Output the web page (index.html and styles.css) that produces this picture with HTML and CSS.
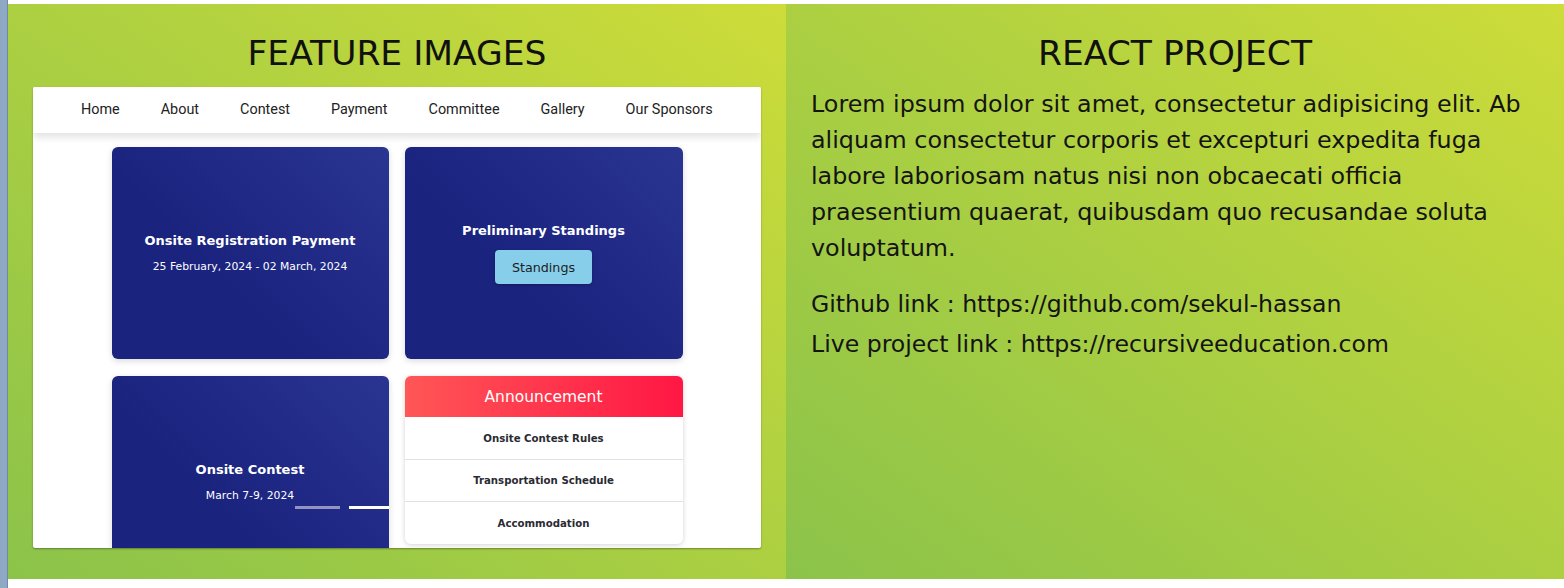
FILE: index.html
```html
<!DOCTYPE html>
<html>
<head>
<meta charset="utf-8">
<link rel="stylesheet" href="styles.css">
</head>
<body>
<div class="page">
  <div class="strip"></div>
  <div class="main">
    <div class="row">
      <section class="panel left">
        <h2 class="title">FEATURE IMAGES</h2>
        <div class="shot">
          <nav class="nav">
            <span>Home</span><span>About</span><span>Contest</span><span>Payment</span><span>Committee</span><span>Gallery</span><span>Our Sponsors</span>
          </nav>
          <div class="grid">
            <div class="card">
              <h3>Onsite Registration Payment</h3>
              <p>25 February, 2024 - 02 March, 2024</p>
            </div>
            <div class="card">
              <h3>Preliminary Standings</h3>
              <button class="btn">Standings</button>
            </div>
            <div class="card">
              <h3>Onsite Contest</h3>
              <p>March 7-9, 2024</p>
              <div class="dots"><span class="dot dim"></span><span class="dot"></span><span class="dot"></span></div>
            </div>
            <div class="notice">
              <div class="notice-head">Announcement</div>
              <div class="notice-row">Onsite Contest Rules</div>
              <div class="notice-row">Transportation Schedule</div>
              <div class="notice-row">Accommodation</div>
            </div>
          </div>
        </div>
      </section>
      <section class="panel right">
        <h2 class="title">REACT PROJECT</h2>
        <p class="desc">Lorem ipsum dolor sit amet, consectetur adipisicing elit. Ab aliquam consectetur corporis et excepturi expedita fuga labore laboriosam natus nisi non obcaecati officia praesentium quaerat, quibusdam quo recusandae soluta voluptatum.</p>
        <p class="link first">Github link : https://github.com/sekul-hassan</p>
        <p class="link">Live project link : https://recursiveeducation.com</p>
      </section>
    </div>
  </div>
</div>
</body>
</html>
```
FILE: styles.css
```css
body {
  margin: 0;
  background: #fff;
  font-family: "DejaVu Sans", sans-serif;
}
.page {
  display: flex;
  height: 588px;
  overflow: hidden;
}
.strip {
  flex: none;
  width: 7px;
  background: #8fa9c5;
  border-right: 1px solid #7089a6;
}
.main {
  flex: 1;
  padding-top: 4px;
}
.row {
  display: flex;
  height: 575px;
}
.panel {
  flex: 1;
  box-sizing: border-box;
  padding: 29px 25px 0;
}
.left {
  background: linear-gradient(to top right, #8bc34a, #cddc39);
}
.right {
  background: linear-gradient(to bottom left, #cddc39, #8bc34a);
}
.title {
  margin: 0;
  font-weight: 400;
  font-size: 34.5px;
  line-height: 40px;
  text-align: center;
  color: #111;
}
.shot {
  margin-top: 14px;
  height: 461px;
  background: #fff;
  overflow: hidden;
  border-radius: 2px;
  box-shadow: 0 1px 2px rgba(0, 0, 0, 0.35);
}
.nav {
  position: relative;
  z-index: 1;
  height: 46px;
  display: flex;
  align-items: center;
  gap: 41px;
  padding-left: 48px;
  background: #fff;
  box-shadow: 0 4px 8px rgba(0, 0, 0, 0.12);
  font-family: Roboto, sans-serif;
  font-size: 14.4px;
  line-height: 48px;
  color: #222;
}
.grid {
  display: grid;
  grid-template-columns: 277px 278px;
  column-gap: 16px;
  row-gap: 17px;
  justify-content: center;
  align-items: start;
  padding-top: 14px;
}
.card {
  position: relative;
  overflow: hidden;
  height: 212px;
  border-radius: 6px;
  background: linear-gradient(225deg, #2a3592 0%, #1a237e 62%);
  box-shadow: 0 2px 6px rgba(0, 0, 0, 0.15);
  color: #fff;
  display: flex;
  flex-direction: column;
  align-items: center;
  justify-content: center;
  text-align: center;
}
.card h3 {
  margin: 0;
  font-size: 13px;
  font-weight: 700;
  line-height: 18px;
}
.card p {
  margin: 10px 0 0;
  font-size: 10.8px;
  line-height: 14px;
}
.btn {
  margin-top: 10px;
  width: 97px;
  height: 34px;
  border: 0;
  border-radius: 4px;
  background: #87ceeb;
  box-shadow: 0 1px 3px rgba(0, 0, 0, 0.25);
  color: #1d1d1d;
  font-family: "DejaVu Sans", sans-serif;
  font-size: 12.7px;
  padding: 0;
}
.dots {
  position: absolute;
  left: 183px;
  top: 130px;
  display: flex;
  gap: 9px;
}
.dot {
  width: 45px;
  height: 3px;
  background: #fff;
}
.dot.dim {
  background: rgba(255, 255, 255, 0.5);
}
.notice {
  height: 168px;
  border-radius: 6px;
  overflow: hidden;
  background: #fff;
  box-shadow: 0 1px 5px rgba(0, 0, 0, 0.18);
}
.notice-head {
  height: 41px;
  display: flex;
  align-items: center;
  justify-content: center;
  background: linear-gradient(to right, #ff5656, #ff1744);
  color: #fff;
  font-size: 15.5px;
}
.notice-row {
  height: 42px;
  display: flex;
  align-items: center;
  justify-content: center;
  font-size: 10.2px;
  font-weight: 700;
  color: #2a2a33;
}
.notice-row + .notice-row {
  border-top: 1px solid #e2e2e2;
  height: 41px;
}
.notice-row:last-child {
  height: 42px;
}
.desc {
  margin: 13px -11px 0 0;
  font-size: 23.8px;
  line-height: 36px;
  color: #141414;
}
.link {
  margin: 0 -11px 0 0;
  font-size: 23.6px;
  line-height: 40px;
  color: #141414;
}
.link.first {
  margin-top: 18px;
}
```
